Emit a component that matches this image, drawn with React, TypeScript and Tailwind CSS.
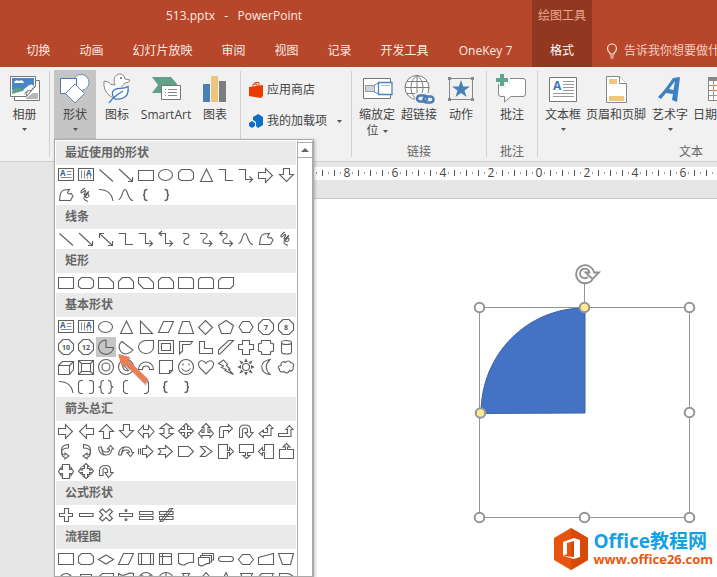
import type { ReactNode } from "react";

const UI_FONT = "font-['Open_Sans','Noto_Sans_CJK_SC',sans-serif]";

/* Outlines of the gallery shapes, each in a 20 by 20 cell. */
const outlines: Record<string, string> = {
  line: "M3.5 4.5L17 16.5",
  arrow: "M3 4L16.5 16.5M16.5 12V16.5H12",
  doubleArrow: "M3.5 4.5L16.5 16.5M16.5 12V16.5H12M3.5 9V4.5H8",
  elbow: "M2.5 4.5H9.5V15.5H17",
  elbowArrow: "M2.5 4.5H9.5V14.5H16.5M13.5 11.5L16.5 14.5L13.5 17.5",
  elbowDouble: "M3.5 4.5H9.5V14.5H16.5M13.5 11.5L16.5 14.5L13.5 17.5M6 2L3 4.5L6 7",
  curved: "M6.5 4.5H10C14 4.5 14 8 10.5 9.5S7 15.5 11 15.5H13",
  curvedArrow: "M4 4.5H8C12 4.5 12 8 9 9.5S6 14.5 11 14.5H16M13 11.5L16 14.5L13 17.5",
  curvedDouble: "M4 4.5H8C12 4.5 12 8 9 9.5S6 14.5 11 14.5H16.5M13.5 11.5L16.5 14.5L13.5 17.5M6.5 2L3.5 4.5L6.5 7",
  curve: "M2.5 14.5C6.5 14.5 6 4.5 9 4.5S11.5 15.5 17 15.5",
  freeform: "M4.5 8.5Q6 5.5 8 5L13.5 4.5L11.5 7.5Q12 9.5 15 8.5L17 11L14.5 15.5H3.5Z",
  scribble: "M9 3C5 5 4 8 5.5 8S9.5 4 9.5 6S7 10 8.5 10S13 5 12.5 7S8 12 10 12.500S14 11 12.5 9.5S7 12 8 14S12 15 11 17",
  arc: "M3 4.5Q15 4.5 17 16",
  rect: "M2.5 5.5H17.5V15.5H2.5Z",
  roundRect: "M5.5 4.5H14.5L17.5 7.5V13.5L15 15.5H5L2.5 13.5V7.5Z",
  snip1: "M2.5 4.5H12.5L17.5 9.5V15.5H2.5Z",
  snip2: "M6.5 4.5H13.5L17.5 8.5V15.5H2.5V8.5Z",
  snipDiagonal: "M2.5 4.5H12.5L17.5 9.5V15.5H7.5L2.5 10.5Z",
  snipRound: "M5.5 4.5H13.5L17.5 8.5V15.5H2.5V7.5Z",
  round1: "M2.5 4.5H15.5L17.5 6.5V15.5H2.5Z",
  round2: "M4.5 4.5H15.5L17.5 6.5V15.5H2.5V6.5Z",
  roundDiagonal: "M5.5 4.5H17.5V12.5L14.5 15.5H2.5V7.5Z",
  triangle: "M10.5 4L16.5 16.5H4.5Z",
  rightTriangle: "M4.5 4V16.5H16.5Z",
  parallelogram: "M7.5 4.5H17.5L12.5 15.5H2.5Z",
  trapezoid: "M6.5 4.5H13.5L17.5 16.5H2.5Z",
  diamond: "M9.5 3.5L16.5 10.5L9.5 17.5L2.5 10.5Z",
  pentagon: "M10 3.5L17.5 8.5L14.5 16.5H5.5L2.5 8.5Z",
  hexagon: "M6.5 4.5H13.5L17 10L13.5 15.5H6.5L3 10Z",
  octagon: "M7 2.5H13L17.5 7V13L13 17.5H7L2.5 13V7Z",
  pie: "M10 3A7.500 7.200 0 1 0 17.500 10.500H10Z",
  chord: "M6 4.5C1 8 3 16.5 10 17Q14 16.5 17 13Z",
  teardrop: "M10 3.5H17.5V10.5A7.5 6.5 0 1 1 10 3.5Z",
  frame: "M2.5 3.5H17.5V16.5H2.5ZM5.5 6.5H14.5V13.5H5.5Z",
  halfFrame: "M3.5 4.5H16.5L14 7.5H6.5V14L3.5 17Z",
  lShape: "M3.5 4.5H8.5V11.5H16.5V16.5H3.5Z",
  stripe: "M2.5 13L12.5 3.5H17.5L4 17H2.5Z",
  cross: "M6.5 3.5H13.5V7.5H17.5V12.5H13.5V17.5H6.5V12.5H2.5V7.5H6.5Z",
  plaque: "M5.5 3.5H14.5V6L17.5 7V14L14.5 15V17.5H5.5V15L2.5 14V7L5.5 6Z",
  can: "M5.5 5.5Q5.5 3.5 10.5 3.5T15.5 5.5V15Q15.5 17 10.5 17T5.5 15ZM5.5 5.5Q5.5 7.5 10.5 7.5T15.5 5.5",
  cube: "M2.5 8.5L6.5 4.5H17.5V12.5L13.5 17.5H2.5ZM2.5 8.5H13.5V17.5M13.5 8.5L17.5 4.5",
  bevel: "M2.5 3.5H17.5V17.5H2.5ZM5.5 6.5H14.5V14.5H5.5ZM2.5 3.5L5.5 6.5M17.5 3.5L14.5 6.5M2.5 17.5L5.5 14.5M17.5 17.5L14.5 14.5",
  donut: "M10 2.5A7.5 7.5 0 1 0 10 17.5A7.5 7.5 0 1 0 10 2.5M10 6A4 4 0 1 0 10 14A4 4 0 1 0 10 6",
  noSymbol: "M10 2.5A7.5 7.5 0 1 0 10 17.5A7.5 7.5 0 1 0 10 2.5M7 7.5L12.5 13.5A4.5 4.5 0 0 1 7 7.5ZM8.5 6L14 12A4.5 4.5 0 0 0 8.5 6Z",
  blockArc: "M2.5 12.5A7.5 7.5 0 0 1 17.5 12.5H13.5A3.5 3.5 0 0 0 6.5 12.5Z",
  folded: "M3.5 3.5H16.5V13.5L13.5 16.5H3.5ZM16.5 13.5H13.5V16.5",
  smiley: "M10 2.5A7.5 7.5 0 1 0 10 17.5A7.5 7.5 0 1 0 10 2.5M5.5 11.5Q10 17 14.5 11.5M7 6.5V8.5M13 6.5V8.5",
  heart: "M10 17L3.5 10.5Q1 5.5 4.500 4Q8 3 10 6.5Q12 3 15.500 4Q19 5.5 16.5 10.5Z",
  lightning: "M2.5 6.5L7.500 3L11.5 7.5L10.5 8.5L14 12L12.5 12.5L17.500 17.500L9 13.5L10 12.5L5.5 10.5L7.5 9Z",
  sun: "M10 6.5A3.5 3.5 0 1 0 10 13.5A3.5 3.5 0 1 0 10 6.5M10 2.500L9 4.500H11ZM10 17.500L9 15.500H11ZM2.500 10L4.500 9V11ZM17.500 10L15.500 9V11ZM4.500 4.500L5.5 6.500L6.500 5.5ZM15.500 4.500L14.5 6.500L13.5 5.5ZM4.500 15.500L5.5 13.500L6.500 14.5ZM15.500 15.500L14.5 13.500L13.5 14.5Z",
  moon: "M14 2.500C3 3.5 3 16.5 14 17.500C9 12.500 9 7.500 14 2.500Z",
  cloud: "M5 8.5C4 5.5 7.500 3.500 9.5 5.500C11 3.500 14 3.500 14.5 5.500C17.500 5.500 18.500 8.5 17 10C18 12.5 15.5 15 13.5 13.5C12.5 16.500 9 16.500 8 14.500C5.5 16 2.500 14 3.500 12C1.500 11 2 8.5 5 8.5Z",
  bracketPair: "M7 3.5H5.5Q2.5 3.5 2.5 6V14Q2.5 16.5 5.5 16.5H7M13 3.5H14.5Q17.5 3.5 17.5 6V14Q17.5 16.5 14.5 16.5H13",
  bracePair: "M8 3.5Q5 3.5 5 6V8Q5 10 2.5 10Q5 10 5 12V14Q5 16.5 8 16.5M12 3.5Q15 3.5 15 6V8Q15 10 17.5 10Q15 10 15 12V14Q15 16.5 12 16.5",
  bracketLeft: "M12 3.5H9.5L7.5 5.5V14.5L9.5 16.5H12",
  bracketRight: "M8 3.5H10.5L12.5 5.5V14.5L10.5 16.5H8",
  rightArrow: "M2.5 7.5H9.5V3.5L16.5 10.5L9.5 17.5V13.5H2.5Z",
  leftArrow: "M17.5 7.5H10.5V3.5L3.5 10.5L10.5 17.5V13.5H17.5Z",
  upArrow: "M7.5 17.5V10.5H3.5L10.5 3.5L17.5 10.5H13.5V17.5Z",
  downArrow: "M7.5 3.5V9.5H3.5L10.5 16.5L17.5 9.5H13.5V3.5Z",
  leftRight: "M2 10.5L7.5 4.5V8.5H12.5V4.5L18 10.5L12.5 16.5V12.5H7.5V16.5Z",
  upDown: "M10.5 2.5L17 7.5H13V12.5H17L10.5 17.5L4 12.5H8V7.5H4Z",
  quad: "M10 2.5L13 5.5H11.5V8.5H14.5V7L17.5 10L14.5 13V11.5H11.5V14.5H13L10 17.5L7 14.5H8.5V11.5H5.5V13L2.5 10L5.5 7V8.5H8.5V5.5H7Z",
  leftRightUp: "M10 2.5L14 6.5H12V11.5H14V8.5L17.5 12.5L14 16.5V14.5H6V16.5L2.5 12.5L6 8.5V11.5H8V6.5H6Z",
  bent: "M3.5 16.5V8Q3.5 5.5 6 5.5H12.5V3.5L16.5 7.5L12.5 11.5V9.5H7.5V16.5Z",
  uturn: "M3.5 16.5V8.5Q3.5 4 9 4Q14.5 4 14.5 8.5V11.5H17L13 16.5L9 11.5H11.5V9Q11.5 7 9 7Q6.5 7 6.5 9V16.5Z",
  leftUp: "M13.5 3.5L17 7.5H15V14.5H7.5V16.5L3 12.5L7.5 9V11.5H11.5V7.5H10Z",
  bentUp: "M13.5 4.5L17 8.5H15V15.5H2.5V12.5H11.5V8.5H10Z",
  curvedRight: "M12.500 4.500V3.500Q5.500 4 5.500 9T9 14V12L13 15L9 18V16.500Q5.500 15.500 5.500 11M12.500 4V7Q6.500 7 5.500 10.500",
  curvedLeft: "M7.500 4.500V3.500Q14.500 4 14.500 9T11 14V12L7 15L11 18V16.500Q14.500 15.500 14.500 11M7.500 4V7Q13.500 7 14.500 10.500",
  curvedUp: "M2.500 6H5.500Q6 11 10 11T13.500 8H11.500L14.500 4.500L17.500 8H16Q15 14 10 14H8Q3 13 2.500 6M5.500 6Q6 13 9 14",
  curvedDown: "M2.500 14H5.500Q6 9 10 9T13 11.500H11L14.500 15.500L17.500 11.500H16Q15 6 10 6H8Q3 7 2.500 14M5.500 14Q6 7 9 6",
  striped: "M2.5 7.5V13.500M4.5 7.5V13.500M6.5 7.5H10.5V4.5L17 10.5L10.5 16.5V13.5H6.5Z",
  notched: "M2.5 7.5H9.5V4.5L16.5 10.5L9.5 16.5V13.5H2.5L5 10.5Z",
  homePlate: "M2.5 5.5H12.5L17.5 10.5L12.5 15.5H2.5Z",
  chevron: "M4.5 5.5H9.5L16 10.5L9.5 15.5H4.5L9.5 10.5Z",
  rightCallout: "M2.5 3.5H11.5V9.5H13.5V6.5L17.5 10.5L13.5 14.5V11.5H11.5V17.5H2.5Z",
  downCallout: "M3.5 3.5H17.5V11.5H11.5V14.5H14L10.5 17.5L7 14.5H9.5V11.5H3.5Z",
  leftCallout: "M17.5 3.5H8.5V9.5H6.5V6.5L2.5 10.5L6.5 14.5V11.5H8.5V17.5H17.5Z",
  upCallout: "M3.5 17.5H17.5V8.5H11.5V6H14L10.5 2.5L7 6H9.5V8.5H3.5Z",
  sideCallout: "M6.5 3.5H13.5V8.5H15V6.5L17.5 10.5L15 14.5V12.5H13.5V17.5H6.5V12.5H5V14.5L2.5 10.5L5 6.5V8.5H6.5Z",
  quadCallout: "M10 2.5L13 5.5H11.5V7.5H13.5V9H15V7L17.5 10L15 13V11.5H13.5V13.5H11.5V15H13L10 17.5L7 15H8.5V13.5H6.5V11.5H5V13L2.5 10L5 7V9H6.5V7.5H8.5V5.5H7Z",
  circular: "M3.5 14.5V9Q4 4.5 10 4.5Q14.5 4.5 14.5 9V11.5H17L12.5 16.5L9 11.5H11.5V9Q11 7 9 7Q7 7 7 9V14.5Z",
  plus: "M8.5 3.5H12.5V8.5H16.5V11.5H12.5V16.5H8.5V11.5H3.5V8.5H8.5Z",
  minus: "M3.5 8.5H17V11.5H3.5Z",
  multiply: "M6.5 4L10 7.5L13.5 4L16.5 6.5L13 10L16.5 13.5L13.5 16L10 12.5L6.5 16L3.5 13.5L7 10L3.5 6.5Z",
  divide: "M3.5 8.5H16.5V11.5H3.5ZM10 4.5A1 1 0 1 0 10 6.5A1 1 0 1 0 10 4.5M10 13.5A1 1 0 1 0 10 15.5A1 1 0 1 0 10 13.5",
  equal: "M3.5 6.5H17V9.5H3.5ZM3.5 11.5H17V14.5H3.5Z",
  notEqual: "M3.5 6.5H17V9.5H3.5ZM3.5 11.5H17V14.5H3.5ZM4 16.5L14 3.5H16.5L6.5 16.5Z",
  process: "M2.5 4.5H17.5V15.5H2.5Z",
  decision: "M2.5 10.5L10 6L17.5 10.5L10 15Z",
  predefined: "M2.5 4.5H17.5V15.5H2.5ZM5.5 4.5V15.5M14.5 4.5V15.5",
  internal: "M3.5 4.5H15.5V15.5H3.5ZM6.5 4.5V15.5M3.5 7.5H15.5",
  document: "M2.5 4.5H17.5V13.5Q13 12.5 10 15T2.5 14Z",
  multidoc: "M2.5 8.5H13.5V14.5Q11 14 8 16T2.5 15.5ZM4.5 8.5V6.5H15.5V13H13.5M6.5 6.5V4.5H17.5V11H15.5",
  terminator: "M5.5 7.5H14.5Q17.5 7.5 17.5 10T14.5 12.5H5.5Q2.5 12.5 2.5 10T5.5 7.5Z",
  preparation: "M6.5 5.5H13.5L17.5 10.5L13.5 15.5H6.5L2.5 10.5Z",
  manualInput: "M2.5 8.5L17.5 4.5V15.5H2.5Z",
  manual: "M2.5 4.5H17.5L14.5 15.5H6.5Z",
  connector: "M10 4.5A6 6 0 1 0 10 16.5A6 6 0 1 0 10 4.5",
  offPage: "M4.5 5.5H15.5V12.5L10 16.5L4.5 12.5Z",
  card: "M6.5 4.5H17.5V15.5H2.5V8Z",
  tape: "M2.5 4.5Q6 7.5 10 5.5T17.5 4.5V14.5Q14 13 10 15.5T2.5 15.5Z",
  summing: "M10 3.5A7 6.5 0 1 0 10 16.5A7 6.5 0 1 0 10 3.5M5 5.5L15 14.5M15 5.5L5 14.5",
  or: "M10 3.5A7 6.5 0 1 0 10 16.5A7 6.5 0 1 0 10 3.5M10 3.5V16.5M3 10H17",
  collate: "M6.5 4.5H13.5L6.5 16.5H13.5Z",
  sort: "M10 3.5L15.5 10L10 16.5L4.5 10ZM4.5 10H15.5",
  extract: "M10 3.5L15.5 15.5H4.5Z",
  merge: "M4.5 4.5H16.5L10.5 16.5Z",
  stored: "M5.5 4.5H17.5Q14 10 17.5 15.5H5.5Q0 10 5.5 4.5Z",
  delay: "M3.5 4.5H10.5Q17.5 5 17.5 10T10.5 15.5H3.5Z",
};

const heavyOutlines: Record<string, string> = {
  braceLeft: "M11.5 4.5Q8.5 4.5 8.5 6.5V8.5Q8.5 10 7 10Q8.5 10 8.5 11.5V13.5Q8.5 15.5 11.5 15.5",
  braceRight: "M8.5 4.5Q11.5 4.5 11.5 6.5V8.5Q11.5 10 13 10Q11.5 10 11.5 11.5V13.5Q11.5 15.5 8.5 15.5",
};

const sidedShapes: Record<string, string> = { sides7: "7", sides8: "8", sides10: "10", sides12: "12" };

function ShapeDrawing({ kind }: { kind: string }) {
  let body: ReactNode;
  if (kind === "textBox") {
    body = (
      <>
        <path d="M2.5 3.5H17.5V15.5H2.5Z" fill="#fff" />
        <path d="M11 6.5H15.5M11 9.5H15.5M4.5 12.5H15.5" stroke="#8a8a8a" />
        <text x="4" y="11" fontSize="8" fontWeight="700" fill="#335f96" stroke="none">A</text>
      </>
    );
  } else if (kind === "verticalTextBox") {
    body = (
      <>
        <path d="M2.5 3.5H17.5V15.5H2.5Z" fill="#fff" />
        <path d="M5.5 5.5V13.5M8.5 5.5V13.5M11.5 11.5V13.5M14.5 11.5V13.5" stroke="#8a8a8a" />
        <text x="10" y="11" fontSize="8" fontWeight="700" fill="#335f96" stroke="none">A</text>
      </>
    );
  } else if (kind === "ellipse") {
    body = <ellipse cx="9.5" cy="10" rx="7" ry="5.5" />;
  } else if (sidedShapes[kind]) {
    body = (
      <>
        <path d={outlines.octagon} />
        <text x="10" y="12.5" fontSize="7" fontWeight="700" textAnchor="middle" fill="#555" stroke="none">
          {sidedShapes[kind]}
        </text>
      </>
    );
  } else if (heavyOutlines[kind]) {
    body = <path d={heavyOutlines[kind]} strokeWidth="1.5" />;
  } else {
    body = <path d={outlines[kind]} />;
  }
  return (
    <svg viewBox="0 0 20 20" className="size-5" fill="none" stroke="#5f5f5f" strokeWidth="1.100" aria-hidden="true">
      {body}
    </svg>
  );
}

const gallery: { title: string; shapes: string }[] = [
  {
    title: "最近使用的形状",
    shapes:
      "textBox verticalTextBox line arrow rect ellipse roundRect triangle elbow elbowArrow rightArrow downArrow freeform scribble arc curve braceLeft braceRight",
  },
  {
    title: "线条",
    shapes: "line arrow doubleArrow elbow elbowArrow elbowDouble curved curvedArrow curvedDouble curve freeform scribble",
  },
  { title: "矩形", shapes: "process roundRect snip1 snip2 snipDiagonal snipRound round1 round2 roundDiagonal" },
  {
    title: "基本形状",
    shapes:
      "textBox verticalTextBox ellipse triangle rightTriangle parallelogram trapezoid diamond pentagon hexagon sides7 sides8 sides10 sides12 pie chord teardrop frame halfFrame lShape stripe cross plaque can cube bevel donut noSymbol blockArc folded smiley heart lightning sun moon cloud arc bracketPair bracePair bracketLeft bracketRight braceLeft braceRight",
  },
  {
    title: "箭头总汇",
    shapes:
      "rightArrow leftArrow upArrow downArrow leftRight upDown quad leftRightUp bent uturn leftUp bentUp curvedRight curvedLeft curvedUp curvedDown striped notched homePlate chevron rightCallout downCallout leftCallout upCallout sideCallout quadCallout circular",
  },
  { title: "公式形状", shapes: "plus minus multiply divide equal notEqual" },
  {
    title: "流程图",
    shapes:
      "process roundRect decision parallelogram predefined internal document multidoc terminator preparation manualInput manual connector offPage card tape summing or collate sort extract merge stored delay",
  },
];

function Caret() {
  return (
    <svg viewBox="0 0 5 3" className="h-[3px] w-[5px] shrink-0" aria-hidden="true">
      <path d="M0 0H5L2.5 3Z" fill="#555" />
    </svg>
  );
}

function ShapeGallery() {
  return (
    <div className="absolute top-full left-0 z-10 flex h-[438px] w-[260px] border border-[#ababab] bg-white pt-px pl-px shadow-[1px_1px_3px_rgba(0,0,0,0.25)]">
      <div className="h-full w-60 overflow-hidden">
        {gallery.map((section) => (
          <section key={section.title}>
            <h3 className="flex h-6 items-center bg-[#eaeaea] pl-[9px] text-xs font-bold text-[#666]">{section.title}</h3>
            <div className="grid grid-cols-12 bg-white">
              {section.shapes.split(" ").map((kind) => (
                <button
                  key={kind}
                  type="button"
                  aria-label={kind}
                  className={kind === "pie" ? "size-5 bg-[#c5c5c5]" : "size-5"}
                >
                  <ShapeDrawing kind={kind} />
                </button>
              ))}
            </div>
          </section>
        ))}
      </div>
      <div className="ml-px flex w-4 flex-col border-x border-[#ababab]">
        <button type="button" aria-label="向上滚动" className="mt-px flex h-4 items-center justify-center border-y border-[#ababab] bg-white">
          <svg viewBox="0 0 8 4" className="h-1 w-2" aria-hidden="true">
            <path d="M0 4L4 0L8 4Z" fill="#666" />
          </svg>
        </button>
      </div>
      <svg viewBox="0 0 36 38" className="absolute top-[210px] left-[60px] h-[38px] w-9" aria-hidden="true">
        <path d="M4 5L16 8L14 11L34 30L31 36L11 16L8 19Z" fill="#777" opacity=".4" />
        <path d="M3 4L15 7L13 10L33 29L30 34L10 14L7 17Z" fill="#ed7d55" />
      </svg>
    </div>
  );
}

/* ---------- ribbon drawings, 32 by 32 ---------- */

function Drawing({ children }: { children: ReactNode }) {
  return (
    <svg viewBox="0 0 32 32" className="size-8 shrink-0" fill="none" aria-hidden="true">
      {children}
    </svg>
  );
}

const albumIcon = (
  <Drawing>
    <path d="M5.5 8V28.5H30.5V8.5H27" fill="#fff" stroke="#777" />
    <path d="M17 26L24 21H29V27H17Z" fill="#b7b7b7" />
    <path d="M1.5 4.5H26.5V14L17 24.5H1.5Z" fill="#fff" stroke="#777" />
    <path d="M3 6H25V14Q22 11 19 14L14 18H3Z" fill="#4a86c5" />
    <path d="M5 11Q6 7 10 9Q14 7 15 11Z" fill="#fff" />
    <path d="M3 19Q8 13 14 18L18 20L15 23H3Z" fill="#5e9f83" />
    <path d="M3 22L17 18L15 23H3Z" fill="#fff" />
    <path d="M26.5 14L17.5 24.5L18 19L22 18.5Z" fill="#fff" stroke="#777" />
  </Drawing>
);

const shapesIcon = (
  <Drawing>
    <circle cx="22" cy="10.5" r="8" fill="#fff" stroke="#6f8fbd" />
    <path d="M1.5 6.5H17.5V21.5H1.5Z" fill="#fff" stroke="#4779b4" />
    <path d="M16 12L25.5 21.5L16 31L6.5 21.5Z" fill="#fff" stroke="#6283b2" />
  </Drawing>
);

const duckIcon = (
  <Drawing>
    <path
      d="M14 13C11 5 16 1.500 20 2Q24 3 24 7L29 8Q28 11 24 11C22 14 21 14 20 15M14 13Q9 13 7 10L3 9Q2 18 8 23Q11 26 14 26"
      fill="#fff"
      stroke="#8a8a8a"
    />
    <circle cx="20" cy="6" r="1" fill="#666" />
    <path d="M14 27Q9 21 13 18C17 15 22 18 27 14.500C28 22 25 28 14 27M8 31Q12 25 22 19" fill="#fff" stroke="#3a78bd" strokeWidth="1.3" />
  </Drawing>
);

const smartArtIcon = (
  <Drawing>
    <path d="M2 5H21L27 12V21H2L8 13Z" fill="#5fa287" />
    <path d="M11.5 13.5H30.5V27.5H11.5Z" fill="#fff" stroke="#777" />
    <path d="M15 17.5H16M18 17.5H27M15 20.5H16M18 20.5H27M15 23.5H16M18 23.5H27" stroke="#888" />
  </Drawing>
);

const chartIcon = (
  <Drawing>
    <path d="M4 12H11V30H4Z" fill="#4a7fb5" />
    <path d="M12 4H19V30H12Z" fill="#eec57c" />
    <path d="M20 9H27V30H20Z" fill="#7d7d7d" />
  </Drawing>
);

const zoomIcon = (
  <Drawing>
    <path d="M2.5 6.5H29.5V26.5H2.5Z" fill="#fff" stroke="#777" />
    <path d="M4.5 13.5H13.5V19.5H4.5Z" fill="#c7d7dd" stroke="#999" />
    <path d="M13 13.5L18 10.5M13 19.5L18 22.5" stroke="#4a86c5" />
    <path d="M17.5 10.5H31V22.5H17.5Z" fill="#fff" stroke="#4a86c5" strokeWidth="1.3" />
    <path d="M20 13.5H29" stroke="#bbb" />
  </Drawing>
);

const globeIcon = (
  <Drawing>
    <circle cx="14" cy="15.5" r="12" fill="#fff" stroke="#7c7c7c" />
    <path d="M14 3.5V27.5M2 15.5H26M4 9.5H24M4 21.5H24M14 3.5C6 9 6 22 14 27.5C22 22 22 9 14 3.5" stroke="#7c7c7c" />
    <path d="M12 21H32V32H12Z" fill="#f1f1f1" />
    <rect x="14" y="23.500" width="10" height="6" rx="3" stroke="#4a7eb5" strokeWidth="2.5" />
    <rect x="20.500" y="24.500" width="10" height="6" rx="3" stroke="#4a7eb5" strokeWidth="2.5" />
  </Drawing>
);

const actionIcon = (
  <Drawing>
    <path d="M4.5 6.5H27.5V27.5H4.5Z" stroke="#888" />
    <path d="M3 5H6V8H3ZM26 5H29V8H26ZM3 26H6V29H3ZM26 26H29V29H26Z" fill="#888" />
    <path d="M16 8L18.2 14.5H25L19.5 18.5L21.5 25L16 21L10.5 25L12.5 18.5L7 14.5H13.800Z" fill="#4680b8" />
  </Drawing>
);

const commentIcon = (
  <Drawing>
    <path d="M5 6.5H27Q29.5 6.5 29.5 9V22Q29.5 24.5 27 24.5H15L8.5 30V24.5H5Q2.5 24.5 2.5 22V9Q2.5 6.5 5 6.5Z" fill="#fff" stroke="#888" />
    <path d="M3 1H10V5H14V12H10V16H3V12H0V5H3Z" fill="#f1f1f1" />
    <path d="M4 2H8V6H12V10H8V14H4V10H0V6H4Z" fill="#62a58b" />
  </Drawing>
);

const textBoxIcon = (
  <Drawing>
    <path d="M2.5 5.5H29.5V29.5H2.5Z" fill="#fff" stroke="#777" />
    <text x="6" y="18" fontSize="12" fontWeight="700" fill="#3c78b8">A</text>
    <path d="M16 9.5H27M16 12.5H27M16 15.5H27M16 18.5H27M6 21.5H27M6 24.5H27" stroke="#999" />
  </Drawing>
);

const pageIcon = (
  <Drawing>
    <path d="M6.5 4.500H19.5L26.5 11.5V30.5H6.5Z" fill="#fff" stroke="#888" />
    <path d="M19.5 4.500V11.5H26.5" fill="#fff" stroke="#888" />
    <path d="M9 7H17V12H9ZM9 24H24V29H9Z" fill="#efc67d" />
  </Drawing>
);

const wordArtIcon = (
  <Drawing>
    <path d="M4 25Q11 18 19 6L26 5L23 30L18 28L19 22L12 21L7 27ZM15 17L19.500 18L21 9Z" fill="#3f80c2" fillRule="evenodd" />
  </Drawing>
);

const dateIcon = (
  <Drawing>
    <path d="M1.5 5.5H30.5V28.5H1.5Z" fill="#fff" stroke="#888" />
    <path d="M1 5H31V9H1Z" fill="#888" />
    <path d="M6.5 9V28M11.5 9V28M16.5 9V28M21.5 9V28M26.5 9V28M2 13.5H30M2 18.5H30M2 23.5H30" stroke="#999" />
    <path d="M6.5 13.5H11.5V18.5H6.5Z" stroke="#e38439" />
  </Drawing>
);

function BigButton({
  icon,
  label,
  width,
  caret = false,
  pressed = false,
}: {
  icon: ReactNode;
  label: string;
  width: string;
  caret?: boolean;
  pressed?: boolean;
}) {
  return (
    <button
      type="button"
      aria-pressed={pressed || undefined}
      className={`flex h-[69px] shrink-0 flex-col items-center pt-0.5 text-xs leading-4 whitespace-nowrap text-[#444] ${width} ${pressed ? "bg-[#c5c5c5]" : ""}`}
    >
      {icon}
      <span className="mt-[3px]">{label}</span>
      {caret && (
        <span className="mt-[5px]">
          <Caret />
        </span>
      )}
    </button>
  );
}

function Group({ children, label, className = "" }: { children: ReactNode; label?: string; className?: string }) {
  return (
    <div className={`relative flex shrink-0 flex-col ${className}`}>
      <div className="flex">{children}</div>
      {label && <div className="mt-[5px] text-center text-xs leading-4 text-[#666]">{label}</div>}
    </div>
  );
}

function Divider() {
  return <div className="my-px w-px shrink-0 bg-[#d2d2d2]" />;
}

const tabs: { label: string; width: string }[] = [
  { label: "切换", width: "w-[53px]" },
  { label: "动画", width: "w-[53px]" },
  { label: "幻灯片放映", width: "w-[89px]" },
  { label: "审阅", width: "w-[53px]" },
  { label: "视图", width: "w-[53px]" },
  { label: "记录", width: "w-[53px]" },
  { label: "开发工具", width: "w-[77px]" },
  { label: "OneKey 7", width: "w-[85px]" },
];

function Header() {
  return (
    <header className="flex h-[67px] shrink-0 bg-[#b7472a] text-xs whitespace-nowrap text-[#fbe9e3]">
      <div className="flex w-[532px] shrink-0 flex-col">
        <h1 className="flex h-8 items-center pl-[166px] text-xs whitespace-pre">513.pptx{"   -   "}PowerPoint</h1>
        <nav className="flex h-[35px] items-center pt-0.5 pl-3">
          {tabs.map((tab) => (
            <button key={tab.label} type="button" className={`h-full shrink-0 ${tab.width}`}>
              {tab.label}
            </button>
          ))}
        </nav>
      </div>
      <div className="flex w-15 shrink-0 flex-col items-center bg-[#923821]">
        <div className="flex h-8 items-center text-[#eba58f]">绘图工具</div>
        <button type="button" className="h-[35px] w-full pt-0.5 text-white">
          格式
        </button>
      </div>
      <button type="button" className="mt-8 flex h-[35px] shrink-0 items-center gap-1.5 pt-0.5 pl-3.5 text-[#f5cdc0]">
        <svg viewBox="0 0 12 16" className="h-4 w-3" fill="none" stroke="#fbe9e3" strokeWidth="1.2" aria-hidden="true">
          <path d="M4 11V10Q1.5 8 1.5 5.5A4.5 4.5 0 0 1 10.5 5.5Q10.5 8 8 10V11ZM4 13H8M4.5 15H7.5" />
        </svg>
        告诉我你想要做什么
      </button>
    </header>
  );
}

function Ribbon() {
  return (
    <div className="flex h-[95px] shrink-0 border-b border-[#cfcfcf] bg-[#f1f1f1] py-[3px]">
      <Group>
        <BigButton icon={albumIcon} label="相册" width="w-[49px]" caret />
      </Group>
      <Divider />
      <Group className="px-1">
        <BigButton icon={shapesIcon} label="形状" width="w-[42px]" caret pressed />
        <BigButton icon={duckIcon} label="图标" width="w-[42px]" />
        <BigButton icon={smartArtIcon} label="SmartArt" width="w-14" />
        <BigButton icon={chartIcon} label="图表" width="w-[42px]" />
        <div className="absolute top-[69px] left-1">
          <ShapeGallery />
        </div>
      </Group>
      <Divider />
      <div className="flex w-[110px] shrink-0 flex-col gap-[7px] pt-2 pl-2 text-xs text-[#444]">
        <button type="button" className="flex h-6 items-center gap-1">
          <svg viewBox="0 0 14 16" className="h-4 w-3.5" aria-hidden="true">
            <path d="M4 5V2H8V4M6 3V0.5H10V4" fill="none" stroke="#e34a1c" />
            <path d="M0 5L14 3V14L12 16L0 14Z" fill="#eb3c00" />
          </svg>
          应用商店
        </button>
        <button type="button" className="flex h-6 items-center gap-1 whitespace-nowrap">
          <svg viewBox="0 0 14 16" className="h-4 w-3.5 shrink-0" aria-hidden="true">
            <path d="M4 4L9 1L14 4V12L9 15L7 13V9L4 7Z" fill="#0b70c6" />
            <path d="M0 10L3 8L6 10V13L3 15L0 13Z" fill="#0b70c6" />
          </svg>
          我的加载项
          <span className="pl-1.5">
            <Caret />
          </span>
        </button>
      </div>
      <Divider />
      <Group label="链接" className="px-1">
        <button type="button" className="flex h-[69px] w-[42px] flex-col items-center pt-0.5 text-xs leading-4 whitespace-nowrap text-[#444]">
          {zoomIcon}
          <span className="mt-[3px]">缩放定</span>
          <span className="flex items-center gap-1">
            位 <Caret />
          </span>
        </button>
        <BigButton icon={globeIcon} label="超链接" width="w-[42px]" />
        <BigButton icon={actionIcon} label="动作" width="w-[42px]" />
      </Group>
      <Divider />
      <Group label="批注">
        <BigButton icon={commentIcon} label="批注" width="w-[50px]" />
      </Group>
      <Divider />
      <Group label="文本" className="w-[303px] pl-[3px]">
        <BigButton icon={textBoxIcon} label="文本框" width="w-11" caret />
        <BigButton icon={pageIcon} label="页眉和页脚" width="w-[62px]" />
        <BigButton icon={wordArtIcon} label="艺术字" width="w-[46px]" caret />
        <BigButton icon={dateIcon} label="日期和时间" width="w-15" />
      </Group>
    </div>
  );
}

function Ruler() {
  const origin = 229;
  const marks = Array.from({ length: 107 }, (_, i) => i - 38);
  return (
    <svg className="h-[13px] w-full shrink-0 overflow-visible bg-white" aria-hidden="true">
      {marks.map((i) => {
        const x = origin + i * 6;
        if (i % 8 === 0) {
          return (
            <text key={i} x={x} y="10" fontSize="12" textAnchor="middle" fill="#444">
              {Math.abs(i) / 4}
            </text>
          );
        }
        return i % 2 === 0 ? (
          <path key={i} d={`M${x - 0.5} 3V9`} stroke="#555" />
        ) : (
          <path key={i} d={`M${x - 0.5} 5V7`} stroke="#999" />
        );
      })}
    </svg>
  );
}

const handles = [
  [10, 46],
  [220, 46],
  [220, 151],
  [10, 256],
  [115, 256],
  [220, 256],
];

function SelectedShape() {
  return (
    <svg viewBox="0 0 230 266" className="absolute top-[62px] left-[159px] h-[266px] w-[230px]" fill="none" role="img" aria-label="饼形">
      <path d="M10.5 46.5H220.5V256.5H10.5ZM115.5 20V46" stroke="#959595" />
      <path d="M116 152L12 152.5C12 93 58 47 116 47Z" fill="#4472c4" stroke="#3b62a8" />
      {handles.map(([x, y]) => (
        <circle key={`${x}-${y}`} cx={x + 0.5} cy={y + 0.5} r="4.8" fill="#fff" stroke="#959595" strokeWidth="2" />
      ))}
      <circle cx="115.5" cy="46.5" r="4.8" fill="#ffe991" stroke="#959595" strokeWidth="2" />
      <circle cx="11.5" cy="152" r="4.8" fill="#ffe991" stroke="#959595" strokeWidth="2" />
      <path
        d="M123.500 18.500A9 9 0 1 1 125 11.500H130L123.500 18L116.500 11.500H120.500A4.800 4.800 0 1 0 119 16"
        fill="#fff"
        stroke="#8f8f8f"
        strokeWidth="1.8"
      />
    </svg>
  );
}

function Watermark() {
  return (
    <div className="absolute right-1 bottom-1.5 flex items-center gap-1 font-bold whitespace-nowrap">
      <svg viewBox="0 0 36 44" className="h-11 w-9" aria-hidden="true">
        <path d="M18 1L35 11V33L18 43L1 33V11Z" fill="#e8540d" />
        <path d="M18 1L35 11V33L18 43Z" fill="#d94a08" />
        <path d="M10 15L21 11L27 13V30L21 32L10 29L21 30V14L14 16V27L10 29Z" fill="#fff" />
      </svg>
      <div className="flex flex-col">
        <span className="text-[19px] leading-5 text-[#159fe4]">Office教程网</span>
        <span className="text-[13px] leading-4 text-[#e8580f]">www.office26.com</span>
      </div>
    </div>
  );
}

export default function App() {
  return (
    <div className={`flex h-screen flex-col overflow-hidden bg-[#e6e6e6] ${UI_FONT}`}>
      <Header />
      <Ribbon />
      <main className="flex min-h-0 grow flex-col pt-[5px] pl-[310px]">
        <Ruler />
        <div className="relative mt-[18px] grow border-t border-[#c6c6c6] bg-white">
          <SelectedShape />
          <Watermark />
        </div>
      </main>
    </div>
  );
}
